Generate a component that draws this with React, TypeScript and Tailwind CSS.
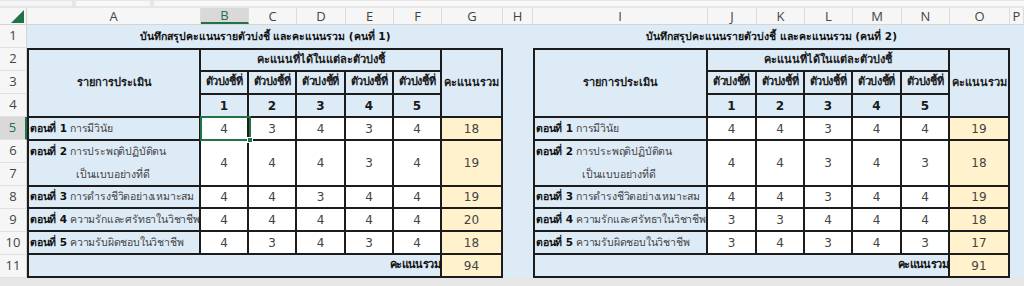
import React from "react";

const FONT = { fontFamily: 'Tahoma, "DejaVu Sans", "Noto Sans", sans-serif' };
const UI_FONT = { fontFamily: '"Open Sans", "Noto Sans", sans-serif' };

const colHeads = [
  { l: "", w: "w-[27px]" },
  { l: "A", w: "w-[174px]" },
  { l: "B", w: "w-[48px]", sel: true },
  { l: "C", w: "w-[48px]" },
  { l: "D", w: "w-[49px]" },
  { l: "E", w: "w-[48px]" },
  { l: "F", w: "w-[48px]" },
  { l: "G", w: "w-[61px]" },
  { l: "H", w: "w-[30px]" },
  { l: "I", w: "w-[175px]" },
  { l: "J", w: "w-[49px]" },
  { l: "K", w: "w-[48px]" },
  { l: "L", w: "w-[48px]" },
  { l: "M", w: "w-[49px]" },
  { l: "N", w: "w-[48px]" },
  { l: "O", w: "w-[60px]" },
  { l: "P", w: "flex-1" },
];

type Person = {
  no: number;
  rows: number[][];
  sums: number[];
  total: number;
};

const people: Person[] = [
  {
    no: 1,
    rows: [
      [4, 3, 4, 3, 4],
      [4, 4, 4, 3, 4],
      [4, 4, 3, 4, 4],
      [4, 4, 4, 4, 4],
      [4, 3, 4, 3, 4],
    ],
    sums: [18, 19, 19, 20, 18],
    total: 94,
  },
  {
    no: 2,
    rows: [
      [4, 4, 3, 4, 4],
      [4, 4, 3, 4, 3],
      [4, 4, 3, 4, 4],
      [3, 3, 4, 4, 4],
      [3, 4, 3, 4, 3],
    ],
    sums: [19, 18, 19, 18, 17],
    total: 91,
  },
];

const items = [
  { part: "ตอนที่ 1", name: "การมีวินัย" },
  { part: "ตอนที่ 2", name: "การประพฤติปฏิบัติตน", line2: "เป็นแบบอย่างที่ดี" },
  { part: "ตอนที่ 3", name: "การดำรงชีวิตอย่างเหมาะสม" },
  { part: "ตอนที่ 4", name: "ความรักและศรัทธาในวิชาชีพ" },
  { part: "ตอนที่ 5", name: "ความรับผิดชอบในวิชาชีพ" },
];

// grid tracks of the table: sheet rows 2..11 -> tracks 1..10
const rowStart = ["row-start-4", "row-start-5", "row-start-7", "row-start-8", "row-start-9"];

function ScoreTable({ p, wide }: { p: Person; wide?: boolean }) {
  const cols = wide
    ? "grid-cols-[171px_47px_46px_46px_47px_46px_58px]"
    : "grid-cols-[170px_46px_46px_47px_46px_46px_59px]";
  const hd = "bg-[#ddebf7] flex items-center justify-center font-bold text-[11px] text-[#1a1a1a] whitespace-nowrap";
  const num = "bg-white flex items-center justify-center text-[12px] text-[#444]";
  const sum = "bg-[#fff2cc] flex items-center justify-center text-[12px] text-[#444]";
  return (
    <div className="relative">
      <div
        className={`grid ${cols} grid-rows-[20px_21px_21px_21px_21px_21px_20px_21px_21px_21px] gap-[2px] p-[2px] bg-[#1c1c1c]`}
      >
        <div className={`${hd} row-span-3 row-start-1 col-start-1`}>รายการประเมิน</div>
        <div className={`${hd} col-span-5 row-start-1 col-start-2`}>คะแนนที่ได้ในแต่ละตัวบ่งชี้</div>
        <div className={`${hd} row-span-3 row-start-1 col-start-7`}>คะแนนรวม</div>
        {[1, 2, 3, 4, 5].map((n) => (
          <div key={n} className={`${hd} row-start-2 tracking-[-0.4px]`}>
            ตัวบ่งชี้ที่
          </div>
        ))}
        {[1, 2, 3, 4, 5].map((n) => (
          <div key={n} className={`${hd} row-start-3 text-[12px]`}>
            {n}
          </div>
        ))}
        {items.map((it, i) => {
          const span = it.line2 ? "row-span-2" : "";
          return (
            <React.Fragment key={i}>
              <div
                className={`${rowStart[i]} ${span} col-start-1 bg-[#ddebf7] flex flex-col justify-center pl-[1px] text-[10.5px] text-[#444] whitespace-nowrap overflow-hidden tracking-[-0.2px]`}
              >
                {it.line2 ? (
                  <>
                    <div className="h-[23px] leading-[21px]">
                      <b className="text-[#111]">{it.part}</b> {it.name}
                    </div>
                    <div className="h-[21px] leading-[21px] pl-[46px]">{it.line2}</div>
                  </>
                ) : (
                  <div>
                    <b className="text-[#111]">{it.part}</b> {it.name}
                  </div>
                )}
              </div>
              {p.rows[i].map((v, j) => (
                <div key={j} className={`${num} ${rowStart[i]} ${span}`}>
                  {v}
                </div>
              ))}
              <div className={`${sum} ${rowStart[i]} ${span}`}>{p.sums[i]}</div>
            </React.Fragment>
          );
        })}
        <div className="row-start-10 col-start-1 col-span-6 bg-[#ddebf7] flex items-center justify-end text-[11px] font-bold text-[#111] tracking-[-0.6px] whitespace-nowrap">
          คะแนนรวม
        </div>
        <div className={`${sum} row-start-10 col-start-7`}>{p.total}</div>
      </div>
      {!wide && (
        <div className="absolute left-[173px] top-[68px] w-[51px] h-[25px] border-2 border-[#217346]">
          <div className="absolute -right-[4px] -bottom-[4px] w-[6px] h-[6px] bg-[#217346] border border-white" />
        </div>
      )}
    </div>
  );
}

export default function App() {
  return (
    <div className="w-[1024px] h-[286px] overflow-hidden bg-[#e6e6e6] flex flex-col" style={FONT}>
      {/* strip above the column headers */}
      <div className="h-[8px] flex">
        <div className="w-[72px] bg-white/60 mt-[1px] mb-[2px]" />
        <div className="w-[74px] ml-[4px] bg-white/70 mt-[1px] mb-[2px]" />
        <div className="flex-1 ml-[4px] bg-white/70 mt-[1px] mb-[2px]" />
      </div>

      {/* column header row */}
      <div className="h-[17px] flex bg-[#f6f6f6] border-b border-[#d4d4d4]">
        {colHeads.map((c, i) =>
          i === 0 ? (
            <div key={i} className={`${c.w} shrink-0 relative border-r border-[#d4d4d4]`}>
              <svg className="absolute right-[2px] bottom-[1px]" width="13" height="13" viewBox="0 0 13 13">
                <path d="M13 0 L13 13 L0 13 Z" fill="#217346" />
              </svg>
            </div>
          ) : (
            <div
              key={i}
              className={`${c.w} shrink-0 flex items-center justify-center text-[13px] leading-none border-r border-[#dcdcdc] ${
                c.sel ? "bg-[#d9d9d9] text-[#217346] border-b-2 border-b-[#217346]" : "text-[#444]"
              }`}
              style={UI_FONT}
            >
              {c.l}
            </div>
          )
        )}
      </div>

      {/* body */}
      <div className="flex h-[253px]">
        <div className="w-[27px] shrink-0 flex flex-col bg-[#f6f6f6]" style={UI_FONT}>
          {Array.from({ length: 11 }, (_, i) => i + 1).map((n) => (
            <div
              key={n}
              className={`h-[23px] flex items-center justify-center text-[13px] border-b border-[#e0e0e0] ${
                n === 5
                  ? "bg-[#d9d9d9] text-[#217346] border-r-2 border-r-[#217346]"
                  : "text-[#444] border-r border-r-[#d4d4d4]"
              }`}
            >
              {n}
            </div>
          ))}
        </div>

        <div className="flex-1 bg-[#ddebf7] grid grid-cols-[476px_30px_477px_1fr] grid-rows-[23px_230px]">
          {people.map((p, idx) => (
            <div
              key={`t${p.no}`}
              className={`${idx === 0 ? "col-start-1" : "col-start-3"} row-start-1 flex items-center justify-center text-[10.5px] font-bold text-[#111] whitespace-nowrap`}
            >
              บันทึกสรุปคะแนนรายตัวบ่งชี้ และคะแนนรวม (คนที่ {p.no})
            </div>
          ))}
          <div className="col-start-1 row-start-2">
            <ScoreTable p={people[0]} />
          </div>
          <div className="col-start-3 row-start-2">
            <ScoreTable p={people[1]} wide />
          </div>
        </div>
      </div>

      <div className="h-[8px] bg-[#e6e6e6]" />
    </div>
  );
}
